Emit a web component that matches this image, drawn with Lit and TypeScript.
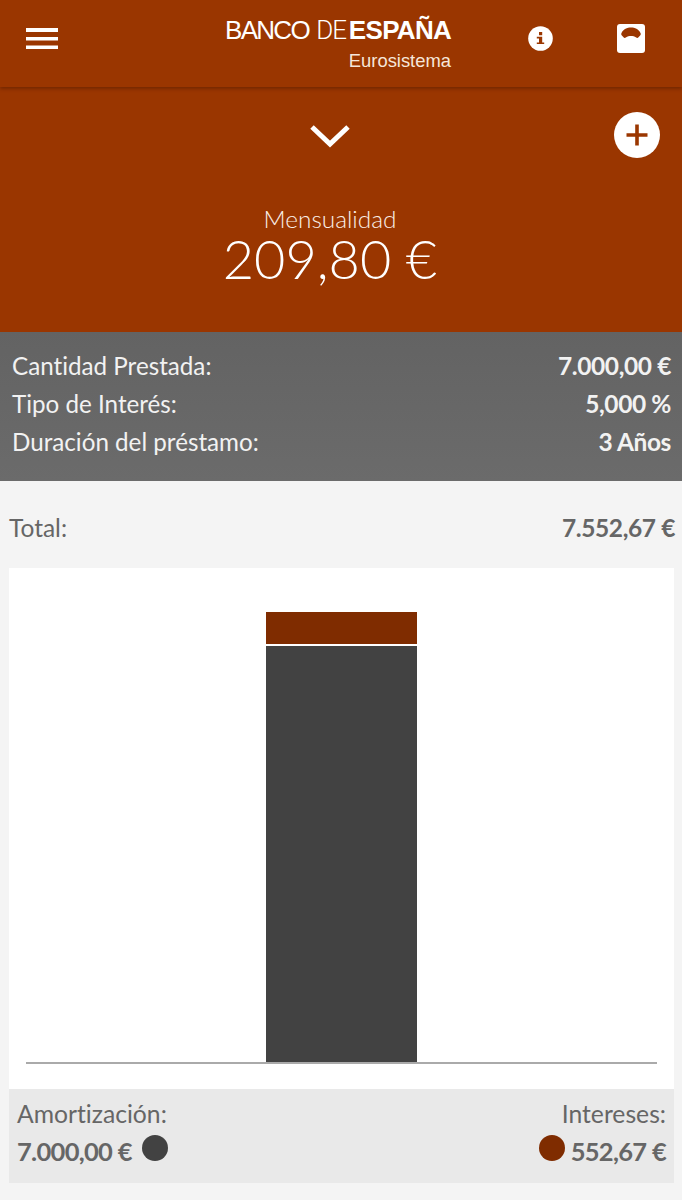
import { LitElement, css, html } from "lit";
import { customElement } from "lit/decorators.js";

const summary = [
  ["Cantidad Prestada:", "7.000,00 €"],
  ["Tipo de Interés:", "5,000 %"],
  ["Duración del préstamo:", "3 Años"],
];

@customElement("app-root")
export class AppRoot extends LitElement {
  static styles = css`
    :host {
      display: block;
      width: 682px;
      height: 1200px;
      overflow: hidden;
      background: #f4f4f4;
      font-family: Lato, "Liberation Sans", sans-serif;
      font-variant-ligatures: none;
      color: #666;
    }
    .header {
      height: 87px;
      display: flex;
      align-items: flex-start;
      background: #9a3600;
      box-shadow: 0 2px 3px rgba(90, 30, 0, 0.55);
      position: relative;
      z-index: 1;
    }
    .menu {
      margin: 28px 0 0 26px;
      width: 32px;
      height: 21px;
      flex: none;
    }
    .logo {
      margin: 16px 0 0 167px;
      width: 226px;
      flex: none;
      color: #fff;
      font-family: "Liberation Sans", sans-serif;
      text-align: right;
    }
    .logo-main {
      font-size: 26px;
      line-height: 29px;
      letter-spacing: -1.7px;
      white-space: nowrap;
    }
    .logo-main .thin {
      font-family: Roboto, "Liberation Sans", sans-serif;
      font-weight: 300;
      letter-spacing: -1.1px;
      margin-left: 2px;
    }
    .logo-main b {
      font-weight: 700;
      margin-left: 3px;
      letter-spacing: -0.7px;
    }
    .logo-sub {
      font-size: 18.400px;
      line-height: 20px;
      margin-top: 6px;
      color: #f6e6da;
    }
    .info {
      margin: 26px 0 0 77px;
      width: 25px;
      height: 25px;
      flex: none;
    }
    .scale {
      margin: 24px 0 0 64px;
      width: 28px;
      height: 29px;
      flex: none;
    }
    .hero {
      height: 245px;
      background: #9a3600;
      position: relative;
      color: #fff;
      text-align: center;
      padding: 37px 22px 0 0;
      box-sizing: border-box;
    }
    .chevron {
      display: block;
      margin: 0 auto;
      width: 40px;
      height: 24px;
    }
    .add {
      position: absolute;
      left: 614px;
      top: 25px;
      width: 46px;
      height: 46px;
    }
    .hero-label {
      margin-top: 56px;
      font-size: 24.400px;
      font-weight: 300;
      line-height: 30px;
      color: #fbf0e8;
    }
    .hero-value {
      font-size: 54px;
      font-weight: 300;
      line-height: 50px;
    }
    .summary {
      height: 149px;
      box-sizing: border-box;
      padding: 15px 11px 0 12px;
      background: linear-gradient(#636363, #6b6b6b);
      color: #fff;
      font-size: 24.200px;
    }
    .summary-row {
      display: flex;
      justify-content: space-between;
      height: 38px;
      line-height: 38px;
      color: #f2f2f2;
    }
    .summary-row b {
      font-size: 24.500px;
      font-weight: 700;
      letter-spacing: -0.4px;
    }
    .total {
      display: flex;
      justify-content: space-between;
      height: 87px;
      box-sizing: border-box;
      padding: 28px 7px 0 9px;
      font-size: 24.500px;
      line-height: 38px;
    }
    .total b {
      letter-spacing: -0.4px;
    }
    .card {
      margin: 0 8px 0 9px;
      height: 521px;
      background: #fff;
      box-sizing: border-box;
      padding: 44px 17px 0;
    }
    .plot {
      height: 452px;
      border-bottom: 2px solid #aaa;
      display: flex;
      flex-direction: column;
      align-items: center;
      box-sizing: border-box;
    }
    .bar-int {
      width: 151px;
      height: 32px;
      background: #7f2c00;
      flex: none;
    }
    .bar-amo {
      width: 151px;
      height: 416px;
      margin-top: 2px;
      background: #424242;
      flex: none;
    }
    .legend {
      margin: 0 8px 0 9px;
      height: 94px;
      background: #e9e9e9;
      box-sizing: border-box;
      padding: 6px 8px 0;
      display: flex;
      justify-content: space-between;
      font-size: 24.700px;
      line-height: 38px;
    }
    .legend-right {
      text-align: right;
    }
    .legend-value {
      display: flex;
      align-items: flex-start;
      margin-top: -1px;
      font-weight: 700;
      font-size: 25.500px;
      letter-spacing: -0.7px;
    }
    .dot {
      width: 26px;
      height: 26px;
      border-radius: 50%;
      flex: none;
      margin-top: 3px;
    }
    .dot.dark {
      background: #424242;
      margin-left: 10px;
    }
    .dot.brown {
      background: #7f2c00;
      margin-right: 6px;
    }
  `;

  render() {
    return html`
      <div class="header">
        <svg class="menu" viewBox="0 0 32 21">
          <path fill="#fff" d="M0 0h32v4H0zM0 9h32v3.500H0zM0 17.500h32V21H0z" />
        </svg>
        <div class="logo">
          <div class="logo-main">BANCO<span class="thin"> DE</span><b>ESPAÑA</b></div>
          <div class="logo-sub">Eurosistema</div>
        </div>
        <svg class="info" viewBox="0 0 25 25">
          <circle cx="12.500" cy="12.500" r="12.300" fill="#fff" />
          <path
            fill="#9a3600"
            d="M11 6h3.200v3.200H11zM8.800 10.800h5.400v5.600h2V18H8.800v-1.600H11v-4H8.800z"
          />
        </svg>
        <svg class="scale" viewBox="0 0 28 29">
          <rect width="28" height="29" rx="3" fill="#fff" />
          <path
            fill="#9a3600"
            d="M4.500 9C6.500 5 10 3.500 14 3.500s7.500 1.500 9.500 5.500c.5 1 .3 1.800-.4 2.500l-1.600 1.800c-.7.7-1.500.8-2.300.2-1.700-1.100-3.400-1.500-5.200-1.500s-3.500.4-5.200 1.500c-.8.6-1.600.5-2.300-.2l-1.600-1.800c-.7-.7-.9-1.500-.4-2.500z"
          />
        </svg>
      </div>
      <div class="hero">
        <svg class="chevron" viewBox="0 0 40 24">
          <path fill="none" stroke="#fff" stroke-width="5" d="M2 3l18 17L38 3" />
        </svg>
        <svg class="add" viewBox="0 0 46 46">
          <circle cx="23" cy="23" r="23" fill="#fff" />
          <path fill="#9a3600" d="M21.200 12.500h3.600v8.700h8.700v3.600h-8.700v8.700h-3.600v-8.700h-8.700v-3.600h8.700z" />
        </svg>
        <div class="hero-label">Mensualidad</div>
        <div class="hero-value">209,80 €</div>
      </div>
      <div class="summary">
        ${summary.map(
          ([label, value]) =>
            html`<div class="summary-row"><span>${label}</span><b>${value}</b></div>`
        )}
      </div>
      <div class="total"><span>Total:</span><b>7.552,67 €</b></div>
      <div class="card">
        <div class="plot">
          <div class="bar-int"></div>
          <div class="bar-amo"></div>
        </div>
      </div>
      <div class="legend">
        <div>
          <div>Amortización:</div>
          <div class="legend-value">7.000,00 €<span class="dot dark"></span></div>
        </div>
        <div class="legend-right">
          <div>Intereses:</div>
          <div class="legend-value"><span class="dot brown"></span>552,67 €</div>
        </div>
      </div>
    `;
  }
}
